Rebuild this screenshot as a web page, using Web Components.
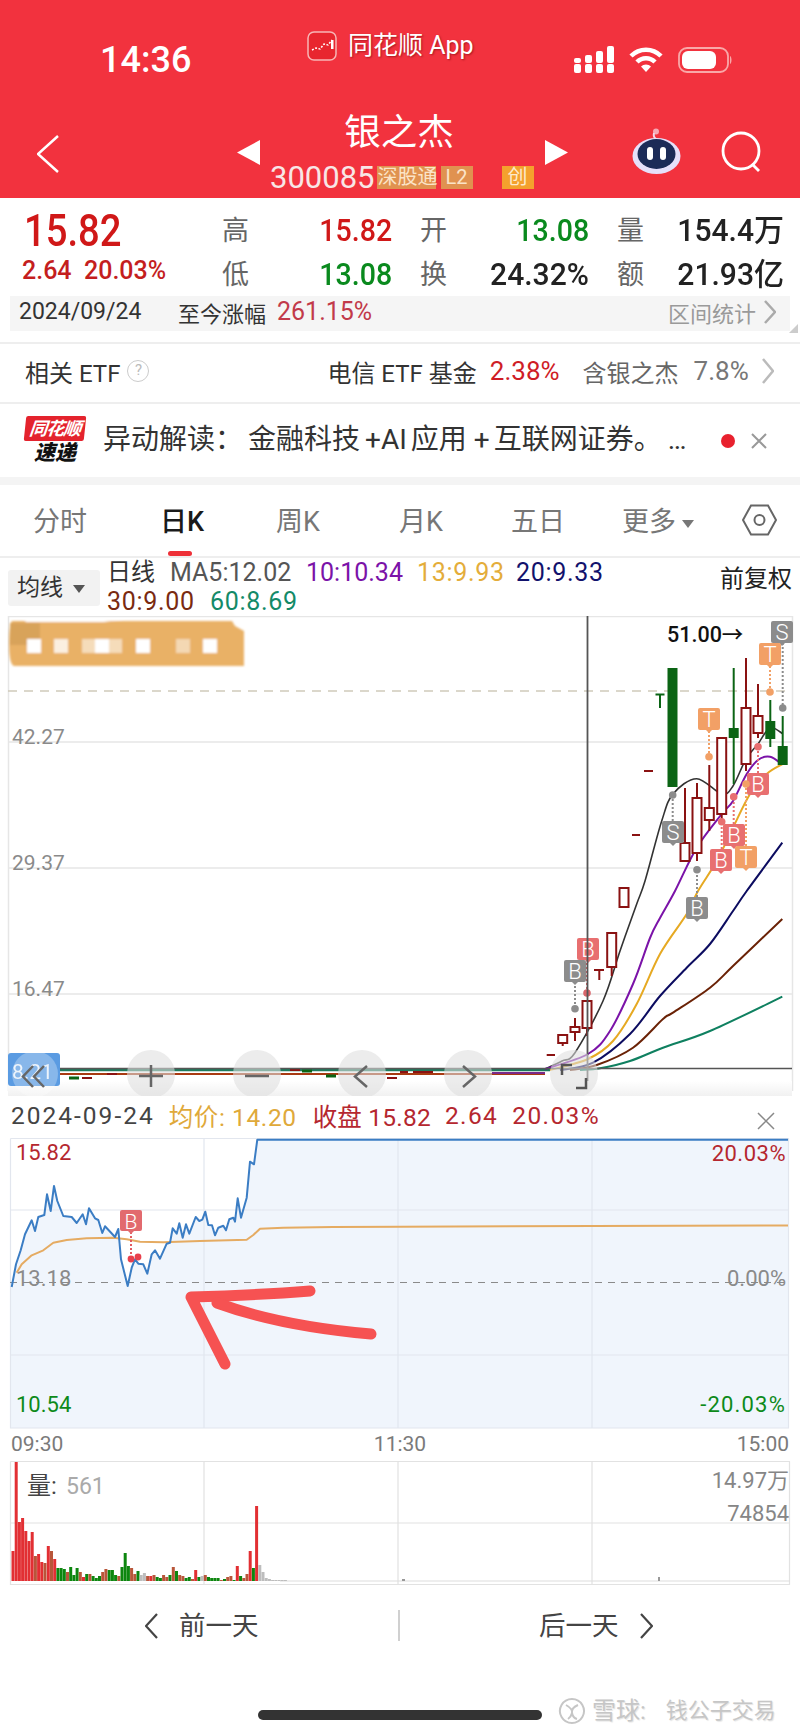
<!DOCTYPE html>
<html lang="zh"><head><meta charset="utf-8"><title>银之杰</title>
<style>
html,body{margin:0;padding:0;background:#fff}
body{width:800px;height:1735px;overflow:hidden;font-family:Roboto,"Noto Sans CJK SC",sans-serif;color:#333}
</style></head><body>
<app-header></app-header>
<quote-panel></quote-panel>
<etf-row></etf-row>
<news-row></news-row>
<period-tabs></period-tabs>
<ma-legend></ma-legend>
<k-chart></k-chart>
<day-head></day-head>
<day-chart></day-chart>
<time-axis></time-axis>
<vol-chart></vol-chart>
<foot-nav></foot-nav>
<script>
const base=':host{display:block;box-sizing:border-box}*{box-sizing:border-box}';
function def(name,css,html){customElements.define(name,class extends HTMLElement{constructor(){super();this.attachShadow({mode:'open'}).innerHTML='<style>'+base+css+'</style>'+(typeof html==='function'?html():html)}})}
const chev=(w,h,c,sw,dir)=>`<svg width="${w}" height="${h}" viewBox="0 0 ${w} ${h}" fill="none" stroke="${c}" stroke-width="${sw}">${dir==='l'?`<path d="M${w-1} 1 L1 ${h/2} L${w-1} ${h-1}"/>`:`<path d="M1 1 L${w-1} ${h/2} L1 ${h-1}"/>`}</svg>`;

def('app-header',`
:host{height:198px;background:#f2323e;color:#fff}
.st{height:105px;display:flex;align-items:flex-start;position:relative}
.time{margin:37px 0 0 100px;font-size:36px;font-weight:500;line-height:46px;width:207px}
.app{margin-top:31px;display:flex;align-items:center;gap:11px;width:267px;font-size:25px;line-height:30px;text-shadow:1px 1px 2px rgba(110,0,10,.55)}
.ic{display:flex;align-items:center;margin-top:46px;gap:15px}
.nav{height:93px;display:flex;position:relative}
.back{width:237px;padding:30px 0 0 37px}
.tri{padding-top:35px;width:23px}
.mid{width:285px;display:flex;flex-direction:column;align-items:center}
.title{font-size:36.500px;line-height:44px;margin:6px 0 0 -7px;color:#fff}
.code{align-self:flex-start;margin:11px 0 0 10px;display:flex;align-items:center;height:23px;font-size:31px;color:#f8e6e6}
.tag{height:23px;background:#e09250;color:#fbe4c8;font-size:20px;line-height:23px;margin-left:2px;padding:0 1px;white-space:nowrap;text-align:center}
.robot{margin:23px 0 0 64px}.search{margin:26px 0 0 40px}
`,`<div class="st"><div class="time">14:36</div>
<div class="app"><svg width="30" height="30" viewBox="0 0 30 30"><rect x="1" y="1" width="28" height="28" rx="6" fill="#e8262f" stroke="#f7b6b6" stroke-width="1.5"/><path d="M5 19l4-2 4 1 4-5 4 1 4-5" fill="none" stroke="#fff" stroke-width="1.5" stroke-dasharray="2 1.5"/><rect x="24" y="9" width="2.5" height="9" fill="#fff"/></svg><span>同花顺 App</span></div>
<div class="ic">
<svg width="40" height="27" viewBox="0 0 40 27" fill="#fff"><rect x="0" y="18" width="7" height="9" rx="2"/><rect x="11" y="18" width="7" height="9" rx="2"/><rect x="22" y="18" width="7" height="9" rx="2"/><rect x="33" y="18" width="7" height="9" rx="2"/><rect x="0" y="12" width="7" height="5" rx="2"/><rect x="11" y="9" width="7" height="8" rx="2"/><rect x="22" y="5" width="7" height="12" rx="2"/><rect x="33" y="0" width="7" height="17" rx="2"/></svg>
<svg width="34" height="27" viewBox="0 0 34 27" fill="none" stroke="#fff" stroke-width="4.5"><path d="M2 10a21 21 0 0 1 30 0"/><path d="M8 16a12.500 12.500 0 0 1 18 0"/><path d="M17 26l-5-5.500a7 7 0 0 1 10 0z" fill="#fff" stroke="none"/></svg>
<svg width="55" height="26" viewBox="0 0 55 26"><rect x="1" y="1" width="49" height="24" rx="8" fill="none" stroke="#f9a8a8" stroke-width="1.800"/><rect x="4" y="4" width="34" height="18" rx="6" fill="#fff"/><path d="M52 9c2 1 2 7 0 8z" fill="#f9a8a8"/></svg>
</div></div>
<div class="nav"><div class="back">${chev(22,38,'#fff',2.5,'l')}</div>
<div class="tri"><svg width="23" height="25" viewBox="0 0 23 25"><path d="M23 0v25L0 12.500z" fill="#fff"/></svg></div>
<div class="mid"><div class="title">银之杰</div><div class="code"><span>300085</span><span class="tag" style="width:59px">深股通</span><span class="tag" style="width:32px;margin-left:5px">L2</span><span class="tag" style="width:32px;margin-left:29px;background:#f4a12d;color:#fdeacc">创</span></div></div>
<div class="tri"><svg width="23" height="25" viewBox="0 0 23 25"><path d="M0 0v25L23 12.500z" fill="#fff"/></svg></div>
<div class="robot"><svg width="49" height="46" viewBox="0 0 49 46"><circle cx="24" cy="3.500" r="3" fill="#f6a9b5"/><path d="M22 5q-1 4 2 6" stroke="#f3d8e8" stroke-width="2" fill="none"/><ellipse cx="24.500" cy="28" rx="24" ry="18" fill="#e6e0fa"/><ellipse cx="24.500" cy="26" rx="19" ry="15" fill="#1c2b57"/><rect x="15" y="19" width="6" height="13" rx="3" fill="#fff"/><rect x="28" y="19" width="6" height="13" rx="3" fill="#fff"/></svg></div>
<div class="search"><svg width="42" height="42" viewBox="0 0 42 42" fill="none" stroke="#fff" stroke-width="2.800"><circle cx="20" cy="20" r="18"/><path d="M31 33l7 7"/></svg></div>
</div>`);

def('quote-panel',`
:host{height:144px;padding-top:11px;position:relative}
.g{display:grid;grid-template-columns:170px 170px 169px 167px;column-gap:28px;padding-left:24px;height:88px;grid-template-rows:44px 44px}
.big{grid-row:1 / span 2;color:#d01818}
.big b{display:block;font-size:45px;line-height:40px;font-weight:500;transform:scaleX(.85);transform-origin:left;margin-top:2px}
.big p{margin:6px 0 0 -2px;font-size:25px;line-height:28px;font-weight:500;color:#c41e1e;white-space:pre}
.c{display:flex;justify-content:space-between;align-items:center;font-size:31px;font-weight:500;color:#222;line-height:44px}
.c i{font-style:normal;font-size:27px;font-weight:400;color:#666}
.r{color:#d01818}.gr{color:#0a8a1e}
.c span{display:inline-block;transform:scaleX(.92);transform-origin:right}
.c span.w{transform:scaleX(.97)}
.bar{margin:-1px 10px 0;height:35px;background:#f5f5f5;display:flex;align-items:center;padding:0 0 4px 9px;font-size:22px;color:#333}
.bar .d{width:159px;white-space:nowrap;font-size:23px}
.bar em{font-style:normal;color:#c23a4a;margin-left:11px;font-size:25px}
.bar .s{margin-left:auto;color:#9a9a9a;display:flex;align-items:center;gap:8px;padding-right:14px}
.cor{position:absolute;right:2px;bottom:9px;width:0;height:0;border-left:9px solid transparent;border-bottom:9px solid #ccc}
`,`<div class="g"><div class="big"><b>15.82</b><p>2.64  20.03%</p></div>
<div class="c"><i>高</i><span class="r">15.82</span></div><div class="c"><i>开</i><span class="gr">13.08</span></div><div class="c"><i>量</i><span class="w">154.4万</span></div>
<div class="c"><i>低</i><span class="gr">13.08</span></div><div class="c"><i>换</i><span class="w">24.32%</span></div><div class="c"><i>额</i><span class="w">21.93亿</span></div></div>
<div class="bar"><span class="d">2024/09/24</span><span>至今涨幅</span><em>261.15%</em><span class="s">区间统计 ${chev(12,24,'#aaa',2.5,'r')}</span></div><div class="cor"></div>`);

def('etf-row',`
:host{height:62px;border-top:2px solid #eee;border-bottom:2px solid #eee;display:flex;align-items:center;padding:0 0 4px 25px;font-size:24px;color:#333;white-space:nowrap}
.q{width:22px;height:22px;border:1.500px solid #ccc;border-radius:50%;color:#bbb;font-size:15px;line-height:19px;text-align:center;margin-left:7px}
.m{margin-left:178px}.r{color:#cf1d26;margin-left:13px;font-size:26px}
.g{color:#666;margin-left:23px}.p{color:#777;margin-left:15px;font-size:26px}.ch{margin-left:13px;display:flex}
`,`<span>相关 ETF</span><span class="q">?</span><span class="m">电信 ETF 基金</span><span class="r">2.38%</span><span class="g">含银之杰</span><span class="p">7.8%</span><span class="ch">${chev(12,26,'#bbb',2.5,'r')}</span>`);

def('news-row',`
:host{height:81px;border-bottom:8px solid #f4f4f4;display:flex;align-items:center;padding:0 0 0 25px;white-space:nowrap}
.logo{width:60px;height:50px;position:relative;margin-right:18px}
.f{height:25px;background:#e4232d;color:#fff;font-size:18px;line-height:25px;font-weight:700;font-style:italic;text-align:center;border-radius:2px;transform:skewX(-6deg);letter-spacing:-1px}
.k{font-size:21px;line-height:25px;font-weight:900;font-style:italic;color:#111;text-align:center}
.t{font-size:28px;color:#333;width:603px;display:flex;line-height:34px;padding-bottom:2px}
.t span{display:block}
.dot{width:14px;height:14px;border-radius:50%;background:#e8212e;margin-left:15px}
.x{margin-left:16px;display:flex}
`,`<div class="logo"><div class="f">同花顺</div><div class="k">速递</div></div><div class="t"><span>异动解读：</span><span style="margin-left:5px">金融科技</span><span style="margin-left:5px">+AI</span><span style="margin-left:4px">应用</span><span style="margin-left:7px">+</span><span style="margin-left:4px">互联网证券。</span><span style="margin-left:6px;font-family:Roboto,sans-serif">…</span></div><div class="dot"></div><div class="x"><svg width="16" height="16" viewBox="0 0 16 16" stroke="#999" stroke-width="2"><path d="M1 1l14 14M15 1L1 15"/></svg></div>`);

def('period-tabs',`
:host{height:73px;border-bottom:2px solid #eee;display:grid;grid-template-columns:120px 124px 108px 138px 96px 144px 58px;position:relative;font-size:27px;color:#777;align-items:center;text-align:center;padding-bottom:2px}
.a{color:#1a1a1a;font-weight:500}
svg{display:block;margin:0 auto}
.bar{position:absolute;left:168px;top:66px;width:24px;height:5px;border-radius:3px;background:#ee3038}
.cr{display:inline-block;border:6px solid transparent;border-top:8px solid #777;border-bottom:0;vertical-align:middle;margin-left:6px}
`,`<div>分时</div><div class="a">日K</div><div>周K</div><div>月K</div><div>五日</div><div>更多<span class="cr"></span></div><div><svg width="35" height="32" viewBox="0 0 35 32" fill="none" stroke="#666" stroke-width="2"><path d="M9 1.500h17L34 16l-8 14.500H9L1 16z"/><circle cx="17.500" cy="16" r="5"/></svg></div><div class="bar"></div>`);

def('ma-legend',`
:host{height:58px;position:relative;padding:0 0 0 107px;font-size:25px;line-height:29px;display:flex;flex-direction:column}
.btn{position:absolute;left:8px;top:12px;width:92px;height:36px;background:#f2f2f2;border-radius:3px;font-size:23px;line-height:36px;color:#333;padding-left:9px}
.btn i{display:inline-block;border:6px solid transparent;border-top:8px solid #555;border-bottom:0;vertical-align:middle;margin-left:10px}
.l{display:flex;white-space:nowrap}
.adj{position:absolute;right:8px;top:6px;font-size:24px;line-height:30px;color:#222}
.sp{letter-spacing:.7px}
`,`<div class="btn">均线<i></i></div><div class="l"><span style="color:#333;width:63px;font-size:24px">日线</span><span style="color:#555;width:136px">MA5:12.02</span><span style="color:#7b13a8;width:111px">10:10.34</span><span class="sp" style="color:#e4ad3a;width:99px">13:9.93</span><span class="sp" style="color:#12126c">20:9.33</span></div>
<div class="l"><span class="sp" style="color:#7a2a10;width:103px">30:9.00</span><span class="sp" style="color:#138a68">60:8.69</span></div><div class="adj">前复权</div>`);

function smooth(str){const p=str.trim().split(/\s+/).map(s=>s.split(',').map(Number));let d=`M${p[0][0]} ${p[0][1]}`;for(let i=0;i<p.length-1;i++){const a=p[Math.max(i-1,0)],b=p[i],c=p[i+1],e=p[Math.min(i+2,p.length-1)];d+=`C${(b[0]+(c[0]-a[0])/6).toFixed(1)} ${(b[1]+(c[1]-a[1])/6).toFixed(1)} ${(c[0]-(e[0]-b[0])/6).toFixed(1)} ${(c[1]-(e[1]-b[1])/6).toFixed(1)} ${c[0]} ${c[1]}`}return d}
function sm(pts,c,w){return `<path d="${smooth(pts)}" fill="none" stroke="${c}" stroke-width="${w||2}"/>`}
function pl(pts,c,w){return `<polyline points="${pts}" fill="none" stroke="${c}" stroke-width="${w||1.600}" stroke-linejoin="round"/>`}
const R='#8a1212',G='#0b6414';
function hollow(x,wt,bt,bb,wb,hw){return `<path d="M${x} ${wt}V${bt}M${x} ${bb}V${wb}" stroke="${R}" stroke-width="2"/><rect x="${x-(hw||4.5)}" y="${bt}" width="${(hw||4.5)*2}" height="${bb-bt}" fill="#fff" stroke="${R}" stroke-width="2"/>`}
function solid(x,wt,bt,bb,wb){return `<path d="M${x} ${wt}V${wb}" stroke="${G}" stroke-width="2"/><rect x="${x-5}" y="${bt}" width="10" height="${bb-bt}" fill="${G}"/>`}
function tag(x,y,l,c){const cx=x+11;return `<rect x="${x}" y="${y}" width="22" height="22" rx="2" fill="${c}"/><path d="M${cx-3} ${y+22}l3 3 3-3z" fill="${c}"/><text x="${cx}" y="${y+19}" font-size="22" font-weight="300" fill="#fff" text-anchor="middle">${l}</text>`}
function dot(x,y1,y2,c){return `<path d="M${x} ${y1}V${y2}" stroke="${c}" stroke-width="2" stroke-dasharray="2 2"/><circle cx="${x}" cy="${y2}" r="3.800" fill="${c}"/>`}
const GY='#8c8c8c',OR='#f2a066',PK='#e86f70';
def('k-chart',`:host{height:480px}svg{display:block}`,()=>{
let s=`<svg width="800" height="480" viewBox="0 615 800 480" font-family="Roboto,'Noto Sans CJK SC',sans-serif">
<defs><linearGradient id="fd" x1="0" y1="0" x2="0" y2="1"><stop offset="0" stop-color="#fff"/><stop offset="1" stop-color="#f1f1f1"/></linearGradient><filter id="bl"><feGaussianBlur stdDeviation="1"/></filter></defs>
<path d="M8.500 1090V615.500H792.500V1090" fill="none" stroke="#e6e6e6" stroke-width="1.500"/>
<g stroke="#e6e6e6" stroke-width="1.500"><path d="M8 741H792M8 867H792M8 993H792"/></g>
<path d="M8 690H792" stroke="#cfcabb" stroke-width="1.500" stroke-dasharray="9 7"/>
<g filter="url(#bl)"><path d="M12 620l220 0 3 5 9 5v35H14q-5-2-5-22t3-23z" fill="#e9b166"/><path d="M10 622h30v22H10z" fill="#d8a35a"/><path d="M24 618h100l-20 3H26z" fill="#fff"/>
<g fill="#fff"><rect x="27" y="638" width="14" height="14"/><rect x="54" y="638" width="14" height="14" opacity=".8"/><rect x="82" y="638" width="40" height="14" opacity=".55"/><rect x="95" y="638" width="14" height="14"/><rect x="136" y="638" width="14" height="14"/><rect x="176" y="638" width="14" height="14" opacity=".5"/><rect x="203" y="638" width="14" height="14"/></g></g>
<g font-size="21" fill="#8a8a8a"><text x="12" y="743">42.27</text><text x="12" y="869">29.37</text><text x="12" y="995">16.47</text></g>
<text x="667" y="641" font-size="21.500" font-weight="500" fill="#111">51.00→</text>`;
s+=`<path d="M60 1069H550" stroke="#1d7a5c" stroke-width="2.500"/><path d="M60 1073H545" stroke="#a83a12" stroke-width="2"/><path d="M492 1072H545" stroke="#7b2a8a" stroke-width="2"/>`;
[[69,79,1077,G],[82,92,1077,R],[107,117,1073,R],[290,300,1069,R],[302,312,1070,G],[326,336,1075,G],[387,397,1077,R],[400,408,1071,R],[413,433,1071,R]].forEach(a=>{s+=`<path d="M${a[0]} ${a[2]}H${a[1]}" stroke="${a[3]}" stroke-width="${a[3]==G?3:2}"/>`});
s+=sm('545,1068 562,1060 575,1051.700 603,1000 620,950 636.700,903 645,880 661.700,820 673,793 696.700,777.700 721.700,793 733,785 746,758 758,743 770,726.700 782.700,732.700','#333',1.600);
s+=sm('545,1068 588,1053 610,1030 633,983 650,937 660,917 675,890 696.700,846.700 721.700,813 733,800 746.700,773 758,759 770,755.700 781.700,763','#7b13a8',2);
s+=sm('550,1069 588,1058 613,1040 636.700,1003 660,953 686.700,913 698,890 716.700,860 733,826.700 750,793 766.700,773 782.700,763','#e6a922',2);
s+=sm('560,1069 593,1061.700 630,1033 660,995 686.700,966.700 710,943 733,910 746.700,890 782.300,841.700','#0c0c60',2);
s+=sm('570,1069 596.700,1064 633,1046.700 663,1018 673,1011.700 710,986.700 733,965 782.300,918','#6a2206',2);
s+=sm('580,1069 600,1067.300 630,1060 663,1046.700 710,1030 782.300,995.700','#0f8060',2);
s+=`<rect x="667.500" y="667" width="10" height="119" fill="${G}"/><path d="M660 693V707M655.500 693.500H664.500" stroke="${G}" stroke-width="2"/>`;
s+=`<path d="M644 770H653M632 834H640M546.700 1054H555M594 969H604M599.300 969V979" stroke="${R}" stroke-width="2"/>`;
s+=hollow(685,787,842,860,860)+hollow(697,782,797,852,860)+hollow(709.300,764,807,819,830)+hollow(721.700,737,737,813,824)+hollow(746,657,707,763,770)+hollow(758,683,715,732,737);
s+=solid(733.700,667,727,737,783)+solid(770.300,699,720,738,746)+solid(782.700,715,745,764,764);
s+=hollow(562.700,1034,1034,1042,1045)+hollow(575,1017,1026,1031,1040)+hollow(587,1000,1000,1027,1035)+hollow(611.700,932,932,966,975)+hollow(624,887,887,906,906);
s+=dot(782.700,642,707,GY)+tag(771,620,'S',GY)+dot(770,665,691,OR)+tag(759,642,'T',OR)+dot(709,730,755.700,OR)+tag(698,707,'T',OR);
s+=dot(672.700,820,794,GY)+tag(662,820,'S',GY)+dot(758,772,745.700,PK)+tag(747,772,'B',PK)+dot(733.700,823,795.700,PK)+dot(721.700,848,820.700,PK)+tag(723,823,'B',PK)+dot(746,845,783,OR)+tag(710,848,'B',PK)+tag(735,845,'T',OR);
s+=dot(697,896,868.700,GY)+tag(686,896,'B',GY)+dot(587,958,992,'#d9656a')+tag(577,937,'B',PK)+dot(575,981,1007.700,GY)+tag(564,959,'B',GY);
s+=`<path d="M587.500 615V1095" stroke="#555" stroke-width="1.800"/><path d="M8 1067.500H792" stroke="#555" stroke-width="1.500"/>`;
s+=`<rect x="8" y="1080" width="784" height="15" fill="url(#fd)"/>`;
s+=`<rect x="8" y="1052" width="52" height="33" rx="3" fill="#5a9be2"/><text x="12" y="1078" font-size="21" fill="#fff" opacity=".85">8.21</text><circle cx="35" cy="1073" r="23" fill="#fff" opacity=".28"/>`;
[151,257,362,468,574].forEach(x=>{s+=`<circle cx="${x}" cy="1073" r="24" fill="#dedede" opacity=".58"/>`});
s+=`<g fill="none" stroke="#666" stroke-width="2.500"><path d="M33 1065L23 1075.500L33 1086M44 1065L34 1075.500L44 1086"/><path d="M151 1064V1086M139 1075H163M245 1075H269M367 1065L355 1075.500L367 1086M463 1065L475 1075.500L463 1086"/></g>
<path d="M562 1074V1064H572M586 1077V1087H576" fill="none" stroke="#555" stroke-width="2.500"/>`;
return s+'</svg>'});

def('day-head',`:host{height:42px;display:flex;align-items:center;padding:0 0 3px 11px;font-size:24.500px;white-space:nowrap;position:relative}
span{letter-spacing:1.400px}.x{position:absolute;left:757px;top:16px;display:flex}`,
`<span style="color:#444;letter-spacing:2px">2024-09-24</span><span style="color:#dfa93a;margin-left:14px;letter-spacing:.6px">均价: 14.20</span><span style="color:#b5272f;margin-left:16px;letter-spacing:.2px">收盘 15.82</span><span style="color:#b5272f;margin-left:14px">2.64</span><span style="color:#b5272f;margin-left:14px">20.03%</span><span class="x"><svg width="18" height="18" viewBox="0 0 18 18" stroke="#888" stroke-width="1.500"><path d="M1 1l16 16M17 1L1 17"/></svg></span>`);

def('day-chart',`:host{height:291px}svg{display:block}`,()=>{
const p=[[35,588],[48,520],[62,478],[75,430],[95,388],[105,420],[115,378],[133,372],[141,310],[152,360],[162,285],[172,330],[190,375],[215,378],[230,396],[248,370],[258,400],[267,352],[285,382],[295,387],[307,426],[315,406],[345,438],[355,414],[363,505],[383,585],[395,530],[405,505],[415,518],[430,520],[442,548],[455,490],[465,478],[480,503],[500,458],[510,455],[518,412],[530,428],[538,397],[548,440],[558,400],[568,428],[587,378],[598,390],[607,386],[616,362],[625,402],[636,403],[645,433],[655,410],[670,404],[678,418],[688,385],[700,380],[705,392],[713,322],[723,380],[740,320],[750,212],[762,220],[772,146]];
const f=a=>(a[0]/3).toFixed(1)+','+(a[1]/3+1090).toFixed(1);
const line=p.map(f).join(' ')+' 788,1138.700';
const av=[[50,545],[65,520],[95,493],[130,478],[160,455],[200,447],[260,442],[340,440],[380,445],[420,452],[490,454],[600,450],[740,446],[760,432],[780,413],[850,410],[1000,408],[1200,407]].map(f).join(' ')+' 788,1224.500';
return `<svg width="800" height="291" viewBox="0 1137 800 291" font-family="Roboto,'Noto Sans CJK SC',sans-serif">
<polygon points="${line} 788,1427 11,1427 11,1286" fill="#f0f5fc"/>
<g stroke="#e2e6ee" stroke-width="1.200" fill="none"><path d="M10.500 1137.500H788.500V1427H10.500V1137.500"/><path d="M10 1209H788M10 1354H788M204 1137V1427M398 1137V1427M592 1137V1427"/></g>
<path d="M10 1281.500H788" stroke="#8a8a8a" stroke-width="1.200" stroke-dasharray="7 6"/>
${pl(av,'#e5ab62',2)}${pl(line,'#3b7dc4',2)}
<path d="M131 1231V1257" stroke="#e25a60" stroke-width="2" stroke-dasharray="2 2"/><rect x="120" y="1209" width="22" height="21" rx="2" fill="#e26a6e"/><path d="M128 1230l3 3 3-3z" fill="#e26a6e"/><text x="131" y="1228" font-size="21" font-weight="300" fill="#fff" text-anchor="middle">B</text><circle cx="131" cy="1258" r="3.400" fill="#e8404c"/><circle cx="138" cy="1256" r="3.400" fill="#e8404c"/>
<g fill="none" stroke="#f65252" stroke-width="11" stroke-linecap="round" stroke-linejoin="round"><path d="M310 1290Q260 1294 191 1296L225 1363"/><path d="M217 1302Q280 1325 371 1333"/></g>
<g font-size="22"><text x="16" y="1159" fill="#b5272f">15.82</text><text x="16" y="1285" fill="#8a8a8a">13.18</text><text x="16" y="1411" fill="#0d8a1a">10.54</text>
<text x="786" y="1160" fill="#b5272f" text-anchor="end" letter-spacing=".5">20.03%</text><text x="786" y="1285" fill="#8a8a8a" text-anchor="end">0.00%</text><text x="786" y="1411" fill="#0d8a1a" text-anchor="end" letter-spacing="1.200">-20.03%</text></g></svg>`});

def('time-axis',`:host{height:32px;display:grid;grid-template-columns:1fr 1fr 1fr;font-size:21px;line-height:30px;color:#7a7a7a;padding:0 11px}
.b{text-align:center}.c{text-align:right}`,'<div>09:30</div><div class="b">11:30</div><div class="c">15:00</div>');

def('vol-chart',`:host{height:124px}svg{display:block}`,()=>{
const data='r30 r119 r59 r63 r50 r40 r49 b25 r27 r19 b18 r35 b30 r22 g13 g13 g12 b9 g14 g6 g13 b9 r4 g7 b7 g5 g3 g5 b9 b12 g11 g11 g6 b5 g14 g28 g15 b13 b7 g10 y6 y8 b5 r5 b6 g4 g3 b6 b4 g6 b14 g10 b6 b5 g3 g4 b2 r11 g4 y5 b6 g4 g3 g3 g3 b1 g2 b4 b5 g1 r15 g5 b3 b7 r30 g13 r75 y16 y9 y3 y2 y1 y1 y1 y1 y1'.split(' ');
const C={r:'#e22f33',g:'#0d860f',b:'#b8563a',y:'#bdbdbd'};
let bars='';data.forEach((d,i)=>{const h=+d.slice(1);bars+=`<rect x="${(11.500+i*3.205).toFixed(1)}" y="${1580-h}" width="3" height="${h}" fill="${C[d[0]]}"/>`});
return `<svg width="800" height="124" viewBox="0 1460 800 124" font-family="Roboto,'Noto Sans CJK SC',sans-serif">
<g stroke="#e2e2e2" stroke-width="1.200" fill="none"><path d="M10.500 1460.500H789.500V1583.500H10.500V1460.500"/><path d="M10 1522H790M204 1460V1583M398 1460V1583M592 1460V1583"/></g>
<path d="M280 1580H790" stroke="#dedede" stroke-width="1.200"/>
<g fill="#999"><rect x="658" y="1576" width="2" height="4"/><rect x="402" y="1578" width="3" height="2"/></g>
${bars}
<text x="27" y="1493" font-size="24" fill="#444">量:</text><text x="66" y="1493" font-size="23" fill="#aaa">561</text>
<g font-size="22" fill="#868686" text-anchor="end"><text x="789" y="1487">14.97万</text><text x="789" y="1520">74854</text></g></svg>`});

def('foot-nav',`:host{height:151px;position:relative;font-size:26.500px;color:#444}
.n{position:absolute;top:24px;height:34px;display:flex;align-items:center;gap:21px;white-space:nowrap;line-height:34px}
.d{position:absolute;left:398px;top:25px;width:2px;height:31px;background:#d0d0d0}
.h{position:absolute;left:258px;top:125px;width:284px;height:10px;border-radius:5px;background:#333}
.w{position:absolute;left:558px;top:112px;display:flex;align-items:center;color:#c6c6c6;font-size:24px;white-space:nowrap;line-height:28px;text-shadow:1px 1px 1px #e4e4e4}
`,`<div class="n" style="left:145px">${chev(13,26,'#444',2.2,'l')}<span>前一天</span></div><div class="d"></div><div class="n" style="left:539px"><span>后一天</span>${chev(13,26,'#444',2.2,'r')}</div><div class="h"></div>
<div class="w"><svg width="28" height="28" viewBox="0 0 28 28" fill="none" stroke="#c6c6c6" stroke-width="2"><path d="M14 2a12 12 0 1 1-.1 0z"/><path d="M8 8q7 4 6 8t-4 6M20 8q-7 3-6 8t5 6"/></svg><span style="margin-left:6px">雪球:</span><span style="font-size:22px;margin-left:20px">钱公子交易</span></div>`);
</script></body></html>
